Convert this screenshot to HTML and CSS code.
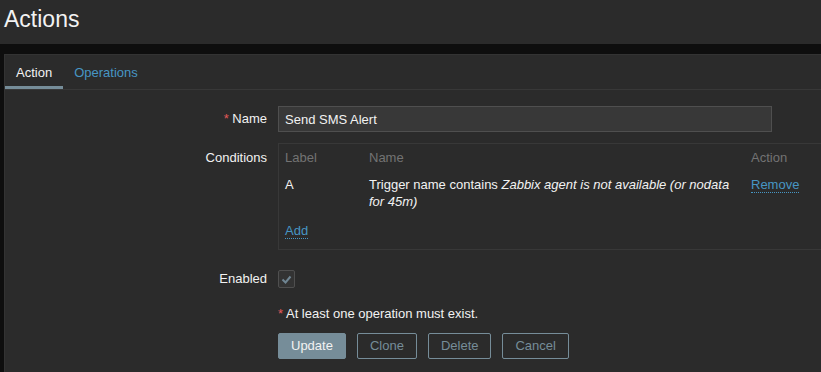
FILE: index.html
```html
<!DOCTYPE html>
<html>
<head>
<meta charset="utf-8">
<link rel="stylesheet" href="styles.css">
</head>
<body>
<header class="page-header"><h1 class="title">Actions</h1></header>
<main class="container">
  <ul class="tabs">
    <li class="tab active">Action</li>
    <li class="tab"><a class="tab-link">Operations</a></li>
  </ul>
  <div class="form">
    <div class="row row-name">
      <div class="lbl"><span class="req">*</span> Name</div>
      <div class="field"><input class="text-input" type="text" value="Send SMS Alert"></div>
    </div>
    <div class="row row-cond">
      <div class="lbl lbl-top">Conditions</div>
      <div class="field">
        <div class="cond-box">
          <div class="cond-head">
            <div class="c-label">Label</div>
            <div class="c-name">Name</div>
            <div class="c-action">Action</div>
          </div>
          <div class="cond-row">
            <div class="c-label">A</div>
            <div class="c-name">Trigger name contains <em>Zabbix agent is not available (or nodata for 45m)</em></div>
            <div class="c-action"><a class="link">Remove</a></div>
          </div>
          <div class="cond-add"><a class="link">Add</a></div>
        </div>
      </div>
    </div>
    <div class="row row-enabled">
      <div class="lbl">Enabled</div>
      <div class="field">
        <span class="checkbox"><svg width="17" height="17" viewBox="0 0 17 17"><path d="M4.5 8.5 L7.5 11.5 L12.5 5.5" fill="none" stroke="#6f8592" stroke-width="2"/></svg></span>
      </div>
    </div>
    <div class="row row-msg">
      <div class="lbl"></div>
      <div class="field msg"><span class="req">*</span> At least one operation must exist.</div>
    </div>
    <div class="row row-buttons">
      <div class="lbl"></div>
      <div class="field buttons">
        <button class="btn btn-primary">Update</button>
        <button class="btn btn-alt">Clone</button>
        <button class="btn btn-alt">Delete</button>
        <button class="btn btn-alt">Cancel</button>
      </div>
    </div>
  </div>
</main>
</body>
</html>
```
FILE: styles.css
```css
html, body {
  margin: 0;
  padding: 0;
  overflow: hidden;
}
body {
  background: #0e0e0e;
  font-family: "Liberation Sans", Arial, sans-serif;
  font-size: 13px;
  line-height: 16px;
  color: #f2f2f2;
  width: 821px;
  height: 372px;
}
.page-header {
  background: #2b2b2b;
  height: 44px;
  box-sizing: border-box;
  padding: 5px 0 0 4px;
}
.title {
  margin: 0;
  font-size: 23px;
  line-height: 28px;
  font-weight: normal;
  color: #f2f2f2;
}
.container {
  box-sizing: border-box;
  margin: 10px 0 0 4px;
  width: 817px;
  height: 318px;
  overflow: hidden;
  background: #2b2b2b;
  border-top: 1px solid #333333;
  border-left: 1px solid #333333;
}
.tabs {
  list-style: none;
  margin: 0;
  padding: 0;
  display: flex;
  border-bottom: 1px solid #383838;
}
.tab {
  padding: 10px 11px 5px;
  border-bottom: 3px solid transparent;
  color: #f2f2f2;
}
.tab.active {
  border-bottom-color: #768d99;
}
.tab-link {
  color: #4796c4;
}
.form {
  padding-top: 16px;
}
.row {
  display: grid;
  grid-template-columns: 262px 1fr;
  column-gap: 11px;
}
.lbl {
  text-align: right;
  color: #f2f2f2;
}
.req {
  color: #e45959;
}
.row-name .lbl {
  padding-top: 5px;
}
.text-input {
  box-sizing: border-box;
  width: 494px;
  height: 26px;
  margin: 0;
  padding: 4px 6px;
  background: #383838;
  border: 1px solid #4f4f4f;
  color: #f2f2f2;
  font-family: "Liberation Sans", Arial, sans-serif;
  font-size: 13px;
  line-height: 16px;
  outline: none;
  display: block;
}
.row-cond {
  margin-top: 11px;
}
.lbl-top {
  padding-top: 7px;
}
.cond-box {
  width: 560px;
  border: 1px solid #383838;
  padding: 6px 6px 10px;
}
.cond-head, .cond-row {
  display: grid;
  grid-template-columns: 84px 382px 1fr;
}
.cond-head {
  color: #737373;
  padding-bottom: 10px;
}
.cond-row {
  line-height: 17px;
}
.cond-row .c-name {
  padding-right: 6px;
}
.cond-add {
  margin-top: 13px;
}
.link {
  color: #4796c4;
  border-bottom: 1px dotted #4796c4;
}
.row-enabled {
  margin-top: 20px;
  align-items: center;
}
.checkbox {
  display: block;
  box-sizing: border-box;
  width: 17px;
  height: 18px;
  background: #333333;
  border: 1px solid #4f4f4f;
  border-radius: 2px;
}
.checkbox svg {
  display: block;
  margin: 0 0 0 -1px;
}
.row-msg {
  margin-top: 18px;
}
.row-buttons {
  margin-top: 11px;
}
.buttons {
  display: flex;
  gap: 11px;
}
.btn {
  box-sizing: border-box;
  height: 26px;
  padding: 0 12px;
  border-radius: 2px;
  font-family: "Liberation Sans", Arial, sans-serif;
  font-size: 13px;
  line-height: 16px;
  margin: 0;
}
.btn-primary {
  background: #768d99;
  border: 1px solid #768d99;
  color: #f2f2f2;
}
.btn-alt {
  background: transparent;
  border: 1px solid #768d99;
  color: #768d99;
}
```
